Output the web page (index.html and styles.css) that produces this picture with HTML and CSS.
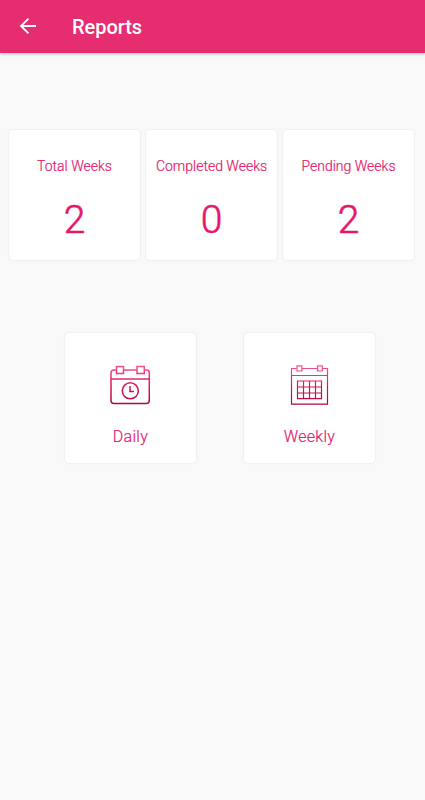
FILE: index.html
```html
<!doctype html>
<html lang="en">
    <head>
        <meta charset="UTF-8" />
        <meta name="viewport" content="width=device-width, initial-scale=1.0" />
        <meta name="theme-color" content="#e52d6f" />
        <title>Reports</title>
        <link rel="stylesheet" href="styles.css">
    </head>
    <body>
        <header class="toolbar">
            <a class="back" href="#" aria-label="Back">
                <svg width="18" height="18" viewBox="0 0 18 18">
                    <path d="M17 8H2.500M9.500 .6L2 8L9.500 15.400" />
                </svg>
            </a>
            <h1>Reports</h1>
        </header>

        <main>
            <section class="stats">
                <div class="card">
                    <h2>Total Weeks</h2>
                    <p class="count">2</p>
                </div>
                <div class="card">
                    <h2>Completed Weeks</h2>
                    <p class="count">0</p>
                </div>
                <div class="card">
                    <h2>Pending Weeks</h2>
                    <p class="count">2</p>
                </div>
            </section>

            <nav class="links">
                <a class="card link" href="#">
                    <svg class="icon" width="43" height="42" viewBox="0 0 43 42">
                        <defs>
                            <linearGradient id="pink" gradientUnits="userSpaceOnUse" x1="0" y1="2" x2="0" y2="40">
                                <stop offset="0" stop-color="#f8578f" />
                                <stop offset="0.5" stop-color="#dc1768" />
                                <stop offset="1" stop-color="#b0063e" />
                            </linearGradient>
                        </defs>
                        <g class="daily">
                            <path d="M7.500 7H5A3 3 0 0 0 2 10V37.500A3 3 0 0 0 5 40.500H37.300A3 3 0 0 0 40.300 37.500V10A3 3 0 0 0 37.300 7H35.500M14.500 7H28M2 16H40.300" />
                            <path d="M7.500 3.500H14.500V10.500H7.500ZM28 3.500H35.300V10.500H28Z" />
                            <circle cx="21.3" cy="27.800" r="8" />
                            <path d="M21 23V28.500H25" />
                        </g>
                    </svg>
                    <span>Daily</span>
                </a>
                <a class="card link" href="#">
                    <svg class="icon" width="43" height="42" viewBox="0 0 43 42">
                        <g class="weekly">
                            <path d="M8.500 5.500H3.500V41.200H39.500V5.500H34.500M14 5.500H29.500M3.500 12.500H39.500" />
                            <path d="M9 2.800H13.800V8H9ZM29.500 2.800H34.300V8H29.500Z" />
                            <path d="M9.500 18H33.500V35.700H9.500ZM9.500 24H33.500M9.500 30H33.500M15.500 18V35.700M21.500 18V35.700M27.500 18V35.700" />
                        </g>
                    </svg>
                    <span>Weekly</span>
                </a>
            </nav>
        </main>
    </body>
</html>
```

FILE: styles.css
```css
* {
    margin: 0;
    padding: 0;
    box-sizing: border-box;
}
body {
    font-family: Roboto, "Liberation Sans", sans-serif;
    background-color: #f9f9f9;
    color: #e5176b;
    min-height: 100vh;
}
a {
    color: inherit;
    text-decoration: none;
}
svg {
    display: block;
    fill: none;
}
.toolbar {
    display: flex;
    align-items: center;
    gap: 35px;
    height: 53px;
    padding-left: 19px;
    background-color: #e52d6f;
    color: #ffffff;
    box-shadow: 0 1px 3px rgba(0, 0, 0, 0.25);
}
.back svg {
    stroke: currentColor;
    stroke-width: 1.8;
}
h1 {
    font-size: 20px;
    font-weight: 500;
    letter-spacing: -0.05px;
}
.stats {
    display: flex;
    justify-content: center;
    gap: 6px;
    padding: 77px 2px 0 0;
}
.card {
    width: 131px;
    height: 130px;
    background-color: #ffffff;
    border-radius: 4px;
    box-shadow: 0 0 2px rgba(0, 0, 0, 0.12);
    text-align: center;
    /* between the light and regular weights */
    -webkit-text-stroke: 0.2px currentColor;
}
h2 {
    padding-top: 28px;
    font-size: 14px;
    font-weight: 300;
    line-height: 16px;
    white-space: nowrap;
}
.count {
    margin-top: 23px;
    font-size: 39px;
    font-weight: 300;
    line-height: 46px;
    -webkit-text-stroke-width: 0.6px;
}
.links {
    display: flex;
    gap: 48px;
    padding: 73px 0 0 65px;
}
.link {
    display: flex;
    flex-direction: column;
    align-items: center;
    padding-top: 30px;
    font-size: 16px;
    font-weight: 300;
    line-height: 20px;
    letter-spacing: 0.3px;
}
.link span {
    margin-top: 22px;
}
.icon {
    margin-right: 1px;
    stroke: url(#pink);
}
.daily {
    stroke-width: 1.5;
}
.weekly {
    stroke-width: 1.2;
}
```
